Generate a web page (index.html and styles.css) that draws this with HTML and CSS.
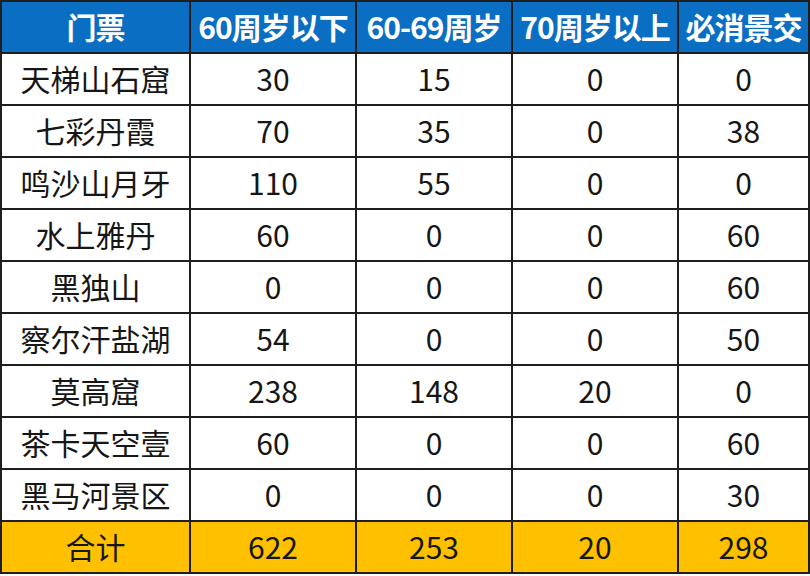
FILE: index.html
```html
<!DOCTYPE html>
<html lang="zh-CN">
<head>
<meta charset="utf-8">
<title>门票</title>
<link rel="stylesheet" href="styles.css">
</head>
<body>
<table class="ticket-table">
  <colgroup>
    <col class="c1"><col class="c2"><col class="c3"><col class="c4"><col class="c5">
  </colgroup>
  <thead>
    <tr class="head-row">
      <th>门票</th><th>60周岁以下</th><th>60-69周岁</th><th>70周岁以上</th><th>必消景交</th>
    </tr>
  </thead>
  <tbody>
    <tr><td>天梯山石窟</td><td>30</td><td>15</td><td>0</td><td>0</td></tr>
    <tr><td>七彩丹霞</td><td>70</td><td>35</td><td>0</td><td>38</td></tr>
    <tr><td>鸣沙山月牙</td><td>110</td><td>55</td><td>0</td><td>0</td></tr>
    <tr><td>水上雅丹</td><td>60</td><td>0</td><td>0</td><td>60</td></tr>
    <tr><td>黑独山</td><td>0</td><td>0</td><td>0</td><td>60</td></tr>
    <tr><td>察尔汗盐湖</td><td>54</td><td>0</td><td>0</td><td>50</td></tr>
    <tr><td>莫高窟</td><td>238</td><td>148</td><td>20</td><td>0</td></tr>
    <tr><td>茶卡天空壹</td><td>60</td><td>0</td><td>0</td><td>60</td></tr>
    <tr><td>黑马河景区</td><td>0</td><td>0</td><td>0</td><td>30</td></tr>
  </tbody>
  <tfoot>
    <tr class="total-row"><td>合计</td><td>622</td><td>253</td><td>20</td><td>298</td></tr>
  </tfoot>
</table>
</body>
</html>
```

FILE: styles.css
```css
html, body {
  margin: 0;
  padding: 0;
  background: #ffffff;
}

body {
  font-family: "Noto Sans CJK SC", "Noto Sans", sans-serif;
  color: #161616;
}

.ticket-table {
  border-collapse: collapse;
  table-layout: fixed;
  width: 808px;
}

.c1 { width: 189px; }
.c2 { width: 166px; }
.c3 { width: 156px; }
.c4 { width: 166px; }
.c5 { width: 131px; }

.ticket-table th,
.ticket-table td {
  border: 2px solid #1e1e1e;
  text-align: center;
  vertical-align: middle;
  padding: 0 0 2px 0;
  font-size: 30px;
  line-height: 1;
  white-space: nowrap;
  overflow: hidden;
}

.ticket-table tr {
  height: 52px;
}

.head-row th {
  background: #0a6fc2;
  color: #ffffff;
  font-weight: 700;
  letter-spacing: -1px;
}

.total-row td {
  background: #ffc000;
}
```
